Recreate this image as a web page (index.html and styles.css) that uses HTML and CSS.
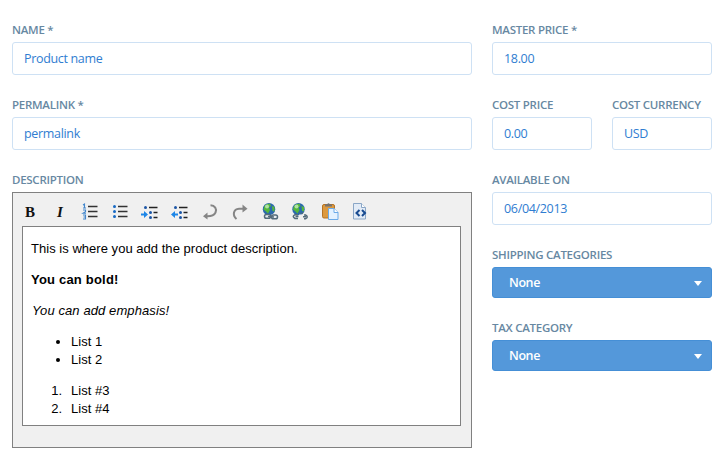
FILE: index.html
```html
<!DOCTYPE html>
<html lang="en">
<head>
<meta charset="utf-8">
<title>Product</title>
<link rel="stylesheet" href="styles.css">
</head>
<body>
<form class="form">
  <div class="main">
    <div class="field"><label class="label">NAME *</label><div class="input">Product name</div></div>
    <div class="field"><label class="label">PERMALINK *</label><div class="input">permalink</div></div>
    <div class="field"><label class="label">DESCRIPTION</label>
      <div class="editor">
        <div class="toolbar">
          <span class="tool bold">B</span>
          <span class="tool italic">I</span>
          <svg class="tool" viewBox="0 0 20 20"><path d="M8 4.500h9.500M8 9.500h9.500M8 14.500h9.500" stroke="#333" stroke-width="1.400"/><path d="M3 3l1.500-1v4M3 6h3M3 8h2.500v1.700L3 11.300h3M3 13h2.500v4H3M3.500 15h2" fill="none" stroke="#4286cc" stroke-width="1.100"/></svg>
          <svg class="tool" viewBox="0 0 20 20"><path d="M8 4.500h9.500M8 9.500h9.500M8 14.500h9.500" stroke="#333" stroke-width="1.400"/><g fill="#1769c4"><circle cx="4.500" cy="4.500" r="1.500"/><circle cx="4.500" cy="9.500" r="1.500"/><circle cx="4.500" cy="14.500" r="1.500"/></g></svg>
          <svg class="tool" viewBox="0 0 20 20"><path d="M9 5.500h8.500M13.500 10.500h4M13.500 15.500h4" stroke="#222" stroke-width="1.400"/><g fill="#1b55a5"><circle cx="5.500" cy="5.500" r="1.500"/><circle cx="10.500" cy="10.500" r="1.500"/><circle cx="10.500" cy="15.500" r="1.500"/></g><path d="M1 11.500h3V9l4 3.500L4 16v-2.500H1z" fill="#1c86e8"/></svg>
          <svg class="tool" viewBox="0 0 20 20"><path d="M9 5.500h8.500M13.500 10.500h4M13.500 15.500h4" stroke="#222" stroke-width="1.400"/><g fill="#1b55a5"><circle cx="5.500" cy="5.500" r="1.500"/><circle cx="10.500" cy="10.500" r="1.500"/><circle cx="10.500" cy="15.500" r="1.500"/></g><path d="M8 11.500H5V9l-4 3.500L5 16v-2.500h3z" fill="#1c86e8"/></svg>
          <svg class="tool" viewBox="0 0 20 20"><path d="M10.500 3.300C15 3.500 17 7 15.500 10.500 14 13.500 10.500 14.500 6.500 14.300" fill="none" stroke="#858585" stroke-width="2"/><path d="M3 14.300L7.500 10.500v7z" fill="#858585"/></svg>
          <svg class="tool" viewBox="0 0 20 20"><path d="M6.500 17C2 13 3.500 7 9 6.700h4.500" fill="none" stroke="#858585" stroke-width="2"/><path d="M17.500 6.700L12.500 2.500v8z" fill="#858585"/></svg>
          <svg class="tool" viewBox="0 0 20 20"><circle cx="9" cy="7.200" r="6.200" fill="#2b69ac"/><path d="M4.500 3.800q2.500-2.500 5.500-2l1 2.200-2 1.500 1 2.500-2 3.500L5.500 9 3.500 7.500zM12 4l2.500 1v4.500l-2-.500z" fill="#55b83c"/><circle cx="7" cy="4.500" r="2" fill="#d7f2c9" opacity=".7"/><g fill="#e8edf0" stroke="#546b7b" stroke-width="1.500"><rect x="4.500" y="12.500" width="6" height="3.800" rx="1.800"/><rect x="11.500" y="13" width="6" height="3.800" rx="1.800"/><path d="M8 14.500l6 .400"/></g></svg>
          <svg class="tool" viewBox="0 0 20 20"><circle cx="8.500" cy="7.200" r="6.200" fill="#2b69ac"/><path d="M4 3.800q2.500-2.500 5.500-2l1 2.200-2 1.500 1 2.500-2 3.500L5 9 3 7.500zM11.500 4l2.500 1v4.500l-2-.500z" fill="#55b83c"/><circle cx="6.500" cy="4.500" r="2" fill="#d7f2c9" opacity=".7"/><path d="M7 15l3-3 3 3v4H7z" fill="#f0f0f0"/><g fill="none" stroke="#546b7b" stroke-width="1.500"><path d="M8 12.700H5q-3.500 1.900 0 3.800h3M14 13h1.500q3.500 1.900 0 3.800H14M5.500 14.600h3M13 14.800h3M10 12l-.500-1.500M12 12l.700-1.500"/></g></svg>
          <svg class="tool" viewBox="0 0 20 20"><rect x="2.500" y="2.500" width="12" height="13.500" rx="1.500" fill="#dc993f" stroke="#b57325"/><path d="M5 4.500V2.500h2q1.500-2.500 3 0h2v2z" fill="#737373"/><path d="M8.500 6.500h5.500l4 4v7H8.500z" fill="#e4f2ff" stroke="#6baae8"/><path d="M14 6.500v4h4" fill="#fff" stroke="#6baae8"/></svg>
          <svg class="tool" viewBox="0 0 20 20"><path d="M3.500 1.500h8l4 4v11.500h-12z" fill="#e2ebf6" stroke="#8aa6c6"/><path d="M11.500 1.500v4h4" fill="#fff" stroke="#8aa6c6"/><path d="M9.500 8l-3 3 3 3M12 8l3 3-3 3" fill="none" stroke="#174a90" stroke-width="2"/></svg>
        </div>
        <div class="content">
          <p>This is where you add the product description.</p>
          <p><strong>You can bold!</strong></p>
          <p><em>You can add emphasis!</em></p>
          <ul><li>List 1</li><li>List 2</li></ul>
          <ol><li>List #3</li><li>List #4</li></ol>
        </div>
      </div>
    </div>
  </div>
  <div class="side">
    <div class="field"><label class="label">MASTER PRICE *</label><div class="input">18.00</div></div>
    <div class="pair">
      <div class="field"><label class="label">COST PRICE</label><div class="input">0.00</div></div>
      <div class="field"><label class="label">COST CURRENCY</label><div class="input">USD</div></div>
    </div>
    <div class="field"><label class="label">AVAILABLE ON</label><div class="input">06/04/2013</div></div>
    <div class="field"><label class="label">SHIPPING CATEGORIES</label><div class="select">None<span class="caret"></span></div></div>
    <div class="field"><label class="label">TAX CATEGORY</label><div class="select">None<span class="caret"></span></div></div>
  </div>
</form>
</body>
</html>
```
FILE: styles.css
```css
@counter-style spaced-decimal { system: extends decimal; suffix: ".\00a0\00a0"; }
* { box-sizing: border-box; }
body { margin: 0; background: #fff; font-family: "Open Sans", sans-serif; }
.form { display: grid; grid-template-columns: 460px 220px; column-gap: 20px; padding: 20px 0 0 12px; height: 449px; overflow: hidden; align-items: start; }
.main, .side { display: flex; flex-direction: column; gap: 20px; }
.pair { display: grid; grid-template-columns: 1fr 1fr; gap: 20px; }
.label { display: block; height: 22px; line-height: 19px; font-size: 11.5px; letter-spacing: -0.27px; font-weight: 600; color: #6788a2; white-space: nowrap; }
.input { height: 33px; line-height: 32px; padding-left: 11px; border: 1px solid #cee1f4; border-radius: 3px; font-size: 12.5px; letter-spacing: -0.33px; color: #2f7dd1; }
.select { display: flex; align-items: center; justify-content: space-between; height: 31px; padding: 0 9px 1px 16px; border: 1px solid #458fd6; border-radius: 3px; background: #5498da; font-size: 12.5px; letter-spacing: -0.4px; font-weight: 600; color: #fff; }
.caret { border: 4.5px solid transparent; border-top: 5px solid #fff; border-bottom: 0; margin-top: 2px; }
.editor { height: 256px; border: 1px solid #808080; background: #f0f0f0; padding: 9px 10px 0 9px; }
.toolbar { display: flex; gap: 10px; height: 24px; margin-left: -2px; }
.tool { flex: none; display: block; width: 20px; height: 20px; }
.bold, .italic { font: bold 15px/20px "Liberation Serif", serif; text-align: center; color: #111; }
.italic { font-style: italic; }
.content { height: 200px; padding: 13px 8px; border: 1px solid #808080; background: #fff; font: 13px/18px "Liberation Sans", sans-serif; letter-spacing: 0.03px; color: #000; }
.content p, .content ul, .content ol { margin: 0 0 13px; }
.content strong { letter-spacing: 0.2px; }
.content em { letter-spacing: 0.1px; margin-left: 1px; }
.content ul { padding-left: 40px; }
.content ol { padding-left: 38.5px; list-style-type: spaced-decimal; }
.content ol li { padding-left: 1.5px; }
```
